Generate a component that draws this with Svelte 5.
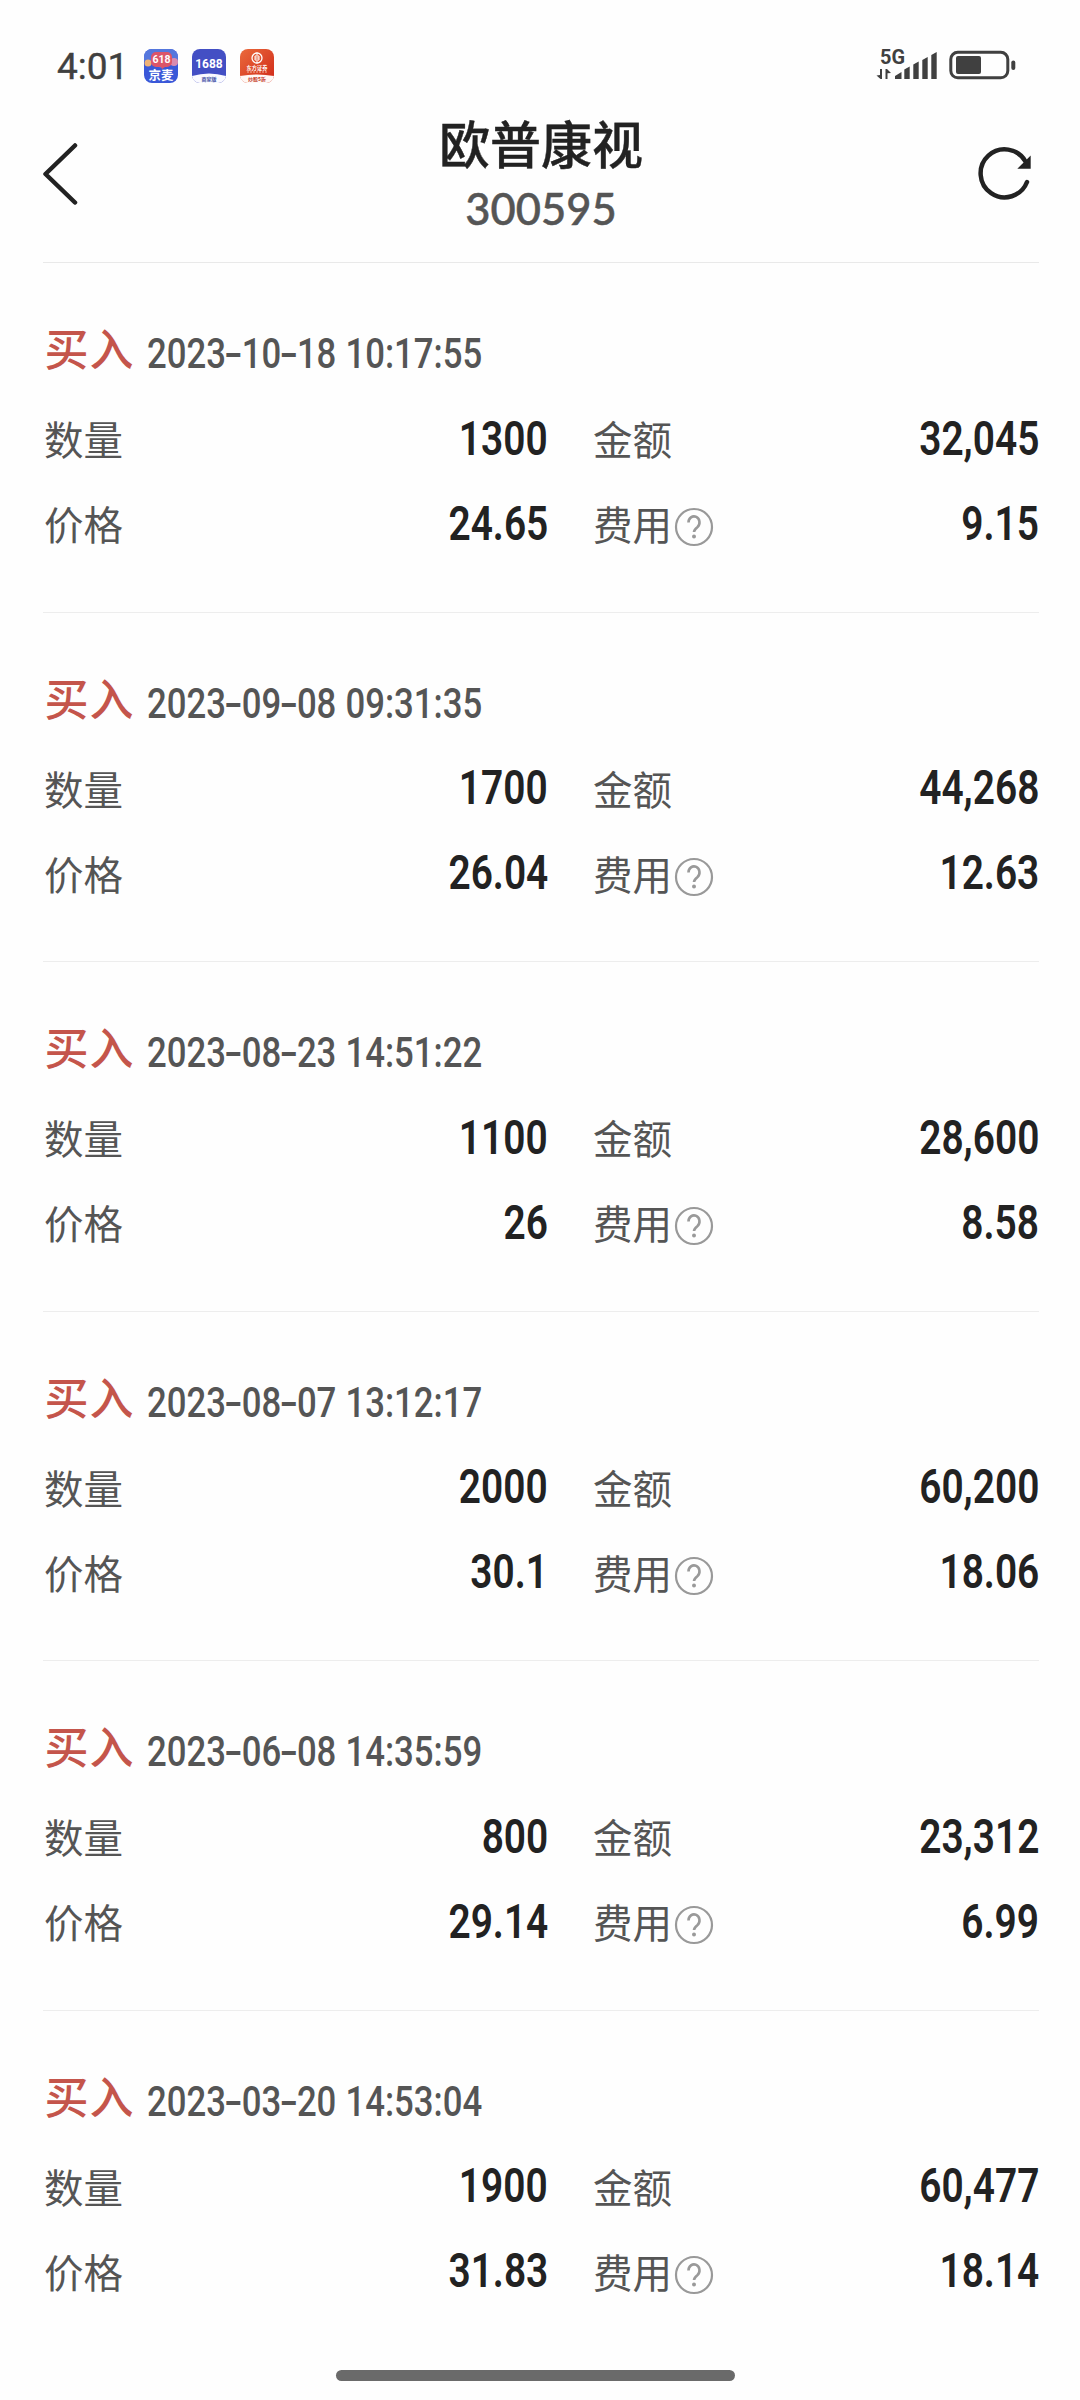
<script>
  let stock = { name: "欧普康视", code: "300595" };

  let trades = [
    { type: "买入", date: "2023-10-18", time: "10:17:55", count: "1300", amount: "32,045", price: "24.65", fee: "9.15" },
    { type: "买入", date: "2023-09-08", time: "09:31:35", count: "1700", amount: "44,268", price: "26.04", fee: "12.63" },
    { type: "买入", date: "2023-08-23", time: "14:51:22", count: "1100", amount: "28,600", price: "26", fee: "8.58" },
    { type: "买入", date: "2023-08-07", time: "13:12:17", count: "2000", amount: "60,200", price: "30.1", fee: "18.06" },
    { type: "买入", date: "2023-06-08", time: "14:35:59", count: "800", amount: "23,312", price: "29.14", fee: "6.99" },
    { type: "买入", date: "2023-03-20", time: "14:53:04", count: "1900", amount: "60,477", price: "31.83", fee: "18.14" },
  ];
</script>

<div class="screen">
  <div class="status-bar">
    <span class="clock">4:01</span>
    <div class="apps">
      <svg width="34" height="34" viewBox="0 0 34 34">
        <rect width="34" height="34" rx="8" fill="#3a58d8" />
        <path d="M0 12V8a8 8 0 0 1 8-8h18a8 8 0 0 1 8 8v4L17 19z" fill="#5577dd" />
        <circle cx="4" cy="14" r="3.5" fill="#efb277" />
        <circle cx="30" cy="13" r="4" fill="#d98bb0" />
        <path d="M12 3h11a5 5 0 0 1 5 5v5a5 5 0 0 1-5 5h-2l-3 2-1-2h-5a5 5 0 0 1-5-5V8a5 5 0 0 1 5-5z" fill="#dc5569" />
        <text x="17.5" y="14" class="app-num" font-size="10.5">618</text>
        <text x="17" y="30.5" class="app-cn" font-size="12.5">京麦</text>
      </svg>
      <svg width="34" height="34" viewBox="0 0 34 34">
        <rect width="34" height="34" rx="8" fill="#434fc4" />
        <path d="M0 27q17-5 34 0a8 8 0 0 1-8 7H8a8 8 0 0 1-8-7z" fill="#fafaff" />
        <text x="17" y="18.5" class="app-num" font-size="12">1688</text>
        <text x="17" y="31.5" class="app-cn" font-size="5" fill="#434fa4">商家版</text>
      </svg>
      <svg width="34" height="34" viewBox="0 0 34 34">
        <defs>
          <linearGradient id="red" x1="0" y1="0" x2="1" y2="1">
            <stop offset="0" stop-color="#ea6a3c" />
            <stop offset="1" stop-color="#d02818" />
          </linearGradient>
        </defs>
        <rect width="34" height="34" rx="8" fill="url(#red)" />
        <path d="M0 27q17-3 34 0a8 8 0 0 1-8 7H8a8 8 0 0 1-8-7z" fill="#fff8f5" />
        <circle cx="17" cy="9" r="5" fill="none" stroke="#fff" stroke-width="1.3" />
        <path d="M17 3.5v3M17 11.5v3M15 7h4v4h-4zM15 9h4" fill="none" stroke="#fff" />
        <text x="17" y="20.5" class="app-cn" font-size="5.2">东方证券</text>
        <path d="M7 23h20" stroke="#f4b5a0" stroke-dasharray="2 1" />
        <text x="17" y="32" class="app-cn" font-size="5" fill="#c03020">炒股5折</text>
      </svg>
    </div>
    <svg class="phone" width="140" height="46" viewBox="0 -6 140 46">
      <text x="4" y="15" class="net" font-size="19.5" textLength="25" lengthAdjust="spacingAndGlyphs">5G</text>
      <g fill="#404040">
        <path d="M0.500 26.500 4 26V20h2v10H4.5zM15 24 11.500 24.300V30H9.500V20H11z" />
        <path d="M19 30v-3l6.500-4v7zM28.300 30v-9.500l5.400-3V30zM37.300 30V15.500l5.400-3V30zM46.300 30V11l5.400-3V30zM55.300 30V6l5.400-3V30z" />
        <rect x="80" y="7" width="25" height="18" rx="2" />
        <rect x="135.300" y="11.500" width="4" height="9.500" rx="2" />
      </g>
      <rect x="74.800" y="3.300" width="57" height="25.500" rx="7" fill="none" stroke="#404040" stroke-width="3" />
    </svg>
  </div>

  <header>
    <svg class="back" width="40" height="64" viewBox="0 0 40 64">
      <path d="M32 3.5 2.5 32 32 60.5" fill="none" stroke="#222" stroke-width="4.5" stroke-linecap="round" stroke-linejoin="round" />
    </svg>
    <div class="stock">
      <h1>{stock.name}</h1>
      <p>{stock.code}</p>
    </div>
    <svg class="refresh" width="56" height="56" viewBox="0 0 56 56">
      <path d="M50 36A24 24 0 1 1 48.5 15.5" fill="none" stroke="#222" stroke-width="4.5" stroke-linecap="round" />
      <path d="M53.7 9.5v13.2H40.3z" fill="#222" />
    </svg>
  </header>

  <main>
    {#each trades as trade}
      <section>
        <div class="head">
          <span class="type">{trade.type}</span>
          <span class="when">{#each trade.date.split("-") as part, i}{#if i > 0}<span class="dash">-</span>{/if}{part}{/each}<span class="time">{trade.time}</span></span>
        </div>
        <div class="grid">
          <div class="cell">
            <span class="label">数量</span>
            <span class="value">{trade.count}</span>
          </div>
          <div class="cell">
            <span class="label">金额</span>
            <span class="value">{trade.amount}</span>
          </div>
          <div class="cell">
            <span class="label">价格</span>
            <span class="value">{trade.price}</span>
          </div>
          <div class="cell">
            <span class="label">费用</span>
            <svg class="help" width="40" height="40" viewBox="0 0 40 40">
              <circle cx="20" cy="20" r="18" fill="none" stroke="#999" stroke-width="2.2" />
              <path d="M14.5 15.5a5.5 6 0 1 1 9 4.5c-2.2 1.8-3.5 2.8-3.5 5" fill="none" stroke="#999" stroke-width="2.6" />
              <circle cx="20" cy="29.5" r="2" fill="#999" />
            </svg>
            <span class="value">{trade.fee}</span>
          </div>
        </div>
      </section>
    {/each}
  </main>

  <div class="home-bar"></div>
</div>

<style>
  :global(body) {
    background: #fefefe;
  }

  .screen {
    position: relative;
    box-sizing: border-box;
    width: 1080px;
    height: 2400px;
    overflow: hidden;
    background: #fefefe;
    font-family: Roboto, "Noto Sans CJK SC", sans-serif;
    color: #222;
  }

  .status-bar {
    display: flex;
    align-items: center;
    height: 110px;
    padding: 22px 64px 0 57px;
    box-sizing: border-box;
  }

  .clock {
    width: 87px;
    font-size: 37px;
    color: #404040;
    -webkit-text-stroke: 0.4px #404040;
  }

  .apps {
    display: flex;
    gap: 14px;
  }

  .phone {
    margin-left: auto;
  }

  .app-num {
    font-family: Roboto, sans-serif;
    font-weight: 700;
    fill: #fff;
    text-anchor: middle;
  }

  .app-cn {
    font-family: "Noto Sans CJK SC", sans-serif;
    font-weight: 700;
    text-anchor: middle;
  }

  .app-cn:not([fill]) {
    fill: #fff;
  }

  .net {
    font-family: Roboto, sans-serif;
    font-weight: 700;
    fill: #404040;
  }

  header {
    display: flex;
    align-items: center;
    justify-content: space-between;
    height: 153px;
    margin: 0 41px 0 43px;
    box-sizing: border-box;
    border-bottom: 1px solid #e9e9e9;
  }

  .back,
  .refresh {
    margin-bottom: 25px;
  }

  .refresh {
    margin-right: 6px;
  }

  .back {
    margin-right: 22px;
  }

  .stock {
    text-align: center;
    margin-bottom: 20px;
  }

  h1 {
    margin: 0;
    font-size: 51px;
    line-height: 62px;
    font-weight: 500;
    -webkit-text-stroke: 0.4px #222;
  }

  p {
    margin: 0;
    padding-top: 2px;
    font-family: Lato, sans-serif;
    font-size: 43.5px;
    line-height: 56px;
    font-weight: 500;
    color: #555;
    -webkit-text-stroke: 0.5px #555;
  }

  section {
    height: 349.5px;
    margin: 0 41px 0 43px;
    padding-top: 57px;
    box-sizing: border-box;
    border-bottom: 1px solid #ededed;
  }

  section:last-child {
    border-bottom: none;
  }

  .head {
    display: flex;
    align-items: center;
    height: 64px;
    padding-left: 1.5px;
  }

  .type {
    width: 102px;
    padding-bottom: 1px;
    font-size: 44px;
    line-height: 63px;
    font-weight: 500;
    letter-spacing: 1px;
    color: #c4554b;
  }

  .when {
    padding-top: 4px;
    font-size: 42px;
    line-height: 50px;
    font-weight: 500;
    color: #555;
    white-space: nowrap;
    transform: scaleX(0.827);
    transform-origin: left;
  }

  .dash {
    display: inline-block;
    width: 19px;
    text-align: center;
    transform: scaleX(1.55);
  }

  .time {
    margin-left: 11px;
  }

  .grid {
    display: grid;
    grid-template-columns: 505px 447px;
    column-gap: 44px;
    grid-auto-rows: 85px;
    padding-top: 15px;
  }

  .cell {
    display: flex;
    align-items: center;
  }

  .label {
    padding: 1px 0 0 1px;
    font-size: 39.5px;
    line-height: 56px;
    color: #555;
  }

  .help {
    margin: 1px 0 0 2px;
  }

  .value {
    margin-left: auto;
    padding-bottom: 6px;
    font-size: 48px;
    line-height: 56px;
    font-weight: 600;
    transform: scaleX(0.81);
    transform-origin: right;
  }

  .home-bar {
    position: absolute;
    left: 336px;
    bottom: 19px;
    width: 399px;
    height: 11px;
    border-radius: 6px;
    background: #6a6a6a;
  }
</style>
